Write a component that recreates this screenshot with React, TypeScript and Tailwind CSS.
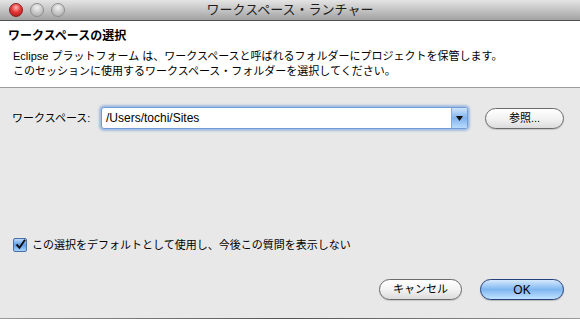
export default function App() {
  const font = "font-['Liberation_Sans','Noto_Sans_CJK_JP',sans-serif]";
  return (
    <div className={`w-[580px] h-[319px] flex flex-col bg-[#e8e8e8] text-black overflow-hidden ${font}`}>
      {/* title bar */}
      <div className="relative h-[21px] shrink-0 flex items-center bg-gradient-to-b from-[#e4e4e4] via-[#c4c4c4] to-[#a2a2a2] border-b border-[#4f4f4f]">
        <div className="flex items-center gap-[7px] pl-[9px]">
          <span className="w-[14px] h-[14px] rounded-full border border-[#8a1d1d] bg-[radial-gradient(circle_at_50%_30%,#ffb3b3_0%,#e53a3a_45%,#a50f0f_100%)]" />
          <span className="w-[14px] h-[14px] rounded-full border border-[#8d8d8d] bg-[radial-gradient(circle_at_50%_30%,#f2f2f2_0%,#c9c9c9_50%,#a5a5a5_100%)]" />
          <span className="w-[14px] h-[14px] rounded-full border border-[#8d8d8d] bg-[radial-gradient(circle_at_50%_30%,#f2f2f2_0%,#c9c9c9_50%,#a5a5a5_100%)]" />
        </div>
        <div className="absolute inset-0 flex items-center justify-center text-[13px] text-[#1e1e1e]">
          ワークスペース・ランチャー
        </div>
      </div>

      {/* header */}
      <div className="h-[67px] shrink-0 bg-white border-b border-[#9c9c9c] pl-[8px] pt-[8px]">
        <div className="text-[12px] font-bold leading-[14px]">ワークスペースの選択</div>
        <div className="pl-[5px] mt-[6px] text-[11px] leading-[15px]">
          <div>Eclipse プラットフォーム は、ワークスペースと呼ばれるフォルダーにプロジェクトを保管します。</div>
          <div>このセッションに使用するワークスペース・フォルダーを選択してください。</div>
        </div>
      </div>

      {/* body */}
      <div className="flex-1 flex flex-col pl-[12px] pr-[16px]">
        <div className="mt-[19px] flex items-center">
          <span className="w-[89px] text-[11px]">ワークスペース:</span>
          <div className="w-[367px] h-[22px] flex rounded-[3px] border border-[#6f9bd6] shadow-[0_0_2px_2px_rgba(110,155,215,0.55)] bg-white">
            <div className="flex-1 flex items-center pl-[4px] text-[12px]">/Users/tochi/Sites</div>
            <div className="w-[16px] flex items-center justify-center border-l border-[#8aaad4] bg-gradient-to-b from-[#cfe4fb] via-[#7fb3ee] to-[#b9dcff] rounded-r-[2px]">
              <svg width="7" height="5" viewBox="0 0 7 5"><path d="M0 0h7L3.5 5z" fill="#111" /></svg>
            </div>
          </div>
          <button className="ml-[17px] w-[79px] h-[21px] rounded-full border border-[#6a6a6a] bg-gradient-to-b from-white via-[#f3f3f3] to-[#dcdcdc] text-[11px] flex items-center justify-center shadow-[0_1px_1px_rgba(0,0,0,0.15)]">
            参照...
          </button>
        </div>

        <div className="flex-1" />

        <div className="flex items-center">
          <span className="w-[14px] h-[14px] ml-[1px] rounded-[2px] border border-[#4a6fa5] bg-gradient-to-b from-[#b9d8fb] via-[#5d9ce6] to-[#a9d3ff] flex items-center justify-center">
            <svg width="11" height="11" viewBox="0 0 11 11"><path d="M1.5 5.5l3 3.2L10 0.8" fill="none" stroke="#111" strokeWidth="2" /></svg>
          </span>
          <span className="ml-[5px] text-[11px]">この選択をデフォルトとして使用し、今後この質問を表示しない</span>
        </div>

        <div className="mt-[26px] mb-[18px] flex justify-end gap-[18px]">
          <button className="w-[83px] h-[21px] rounded-full border border-[#6a6a6a] bg-gradient-to-b from-white via-[#f3f3f3] to-[#dcdcdc] text-[11px] flex items-center justify-center shadow-[0_1px_1px_rgba(0,0,0,0.15)]">
            キャンセル
          </button>
          <button className="w-[84px] h-[21px] rounded-full border border-[#24407a] bg-gradient-to-b from-[#d6e9fd] via-[#7fb6f0] to-[#bfe3ff] text-[12px] flex items-center justify-center shadow-[0_1px_1px_rgba(0,0,0,0.2)]">
            OK
          </button>
        </div>
      </div>
      <div className="h-[1px] shrink-0 bg-gradient-to-r from-[#9a9a9a] via-[#555] to-[#9a9a9a]" />
    </div>
  );
}
